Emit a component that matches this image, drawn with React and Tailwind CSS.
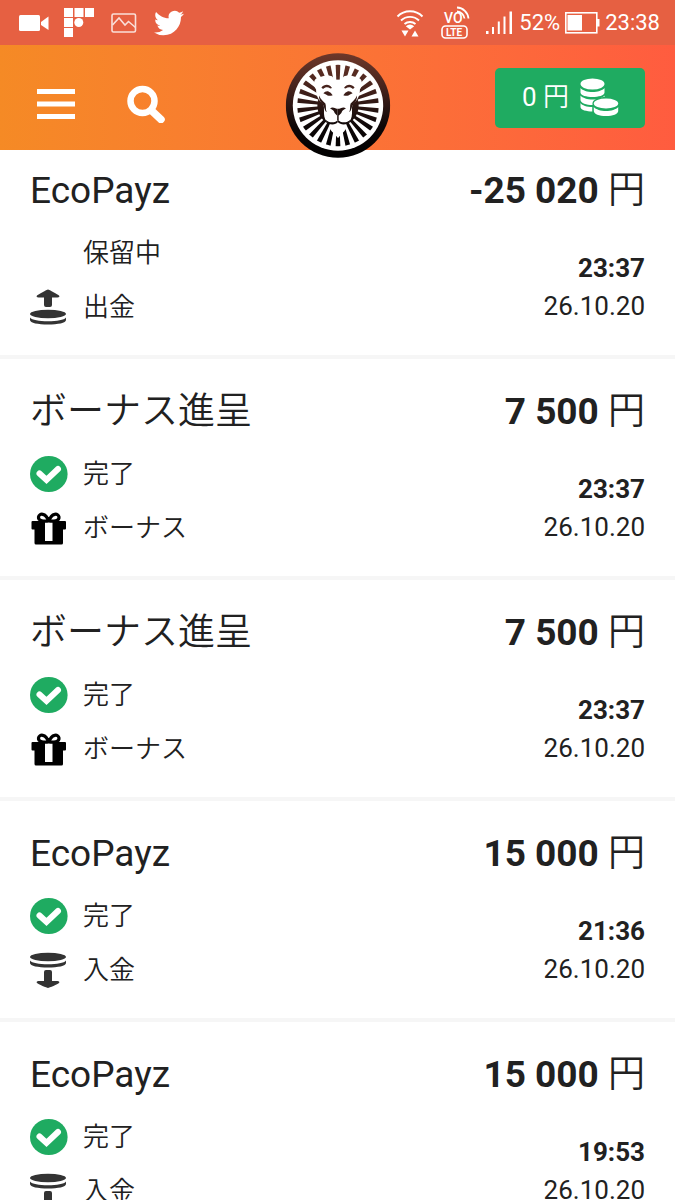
import clsx from "clsx";

const transactions = [
    { id: 1, title: "EcoPayz", amount: "-25 020", status: "保留中", done: false, type: "withdraw", time: "23:37", date: "26.10.20" },
    { id: 2, title: "ボーナス進呈", amount: "7 500", status: "完了", done: true, type: "bonus", time: "23:37", date: "26.10.20" },
    { id: 3, title: "ボーナス進呈", amount: "7 500", status: "完了", done: true, type: "bonus", time: "23:37", date: "26.10.20" },
    { id: 4, title: "EcoPayz", amount: "15 000", status: "完了", done: true, type: "deposit", time: "21:36", date: "26.10.20" },
    { id: 5, title: "EcoPayz", amount: "15 000", status: "完了", done: true, type: "deposit", time: "19:53", date: "26.10.20" },
];

const types = {
    withdraw: { label: "出金", Icon: WithdrawIcon },
    deposit: { label: "入金", Icon: DepositIcon },
    bonus: { label: "ボーナス", Icon: GiftIcon },
};

/* Status bar icons */
function VideoIcon() {
    return (
        <svg viewBox="0 0 30 16" className="h-4 w-[30px]" fill="currentColor">
            <rect x="0" y="0" width="21" height="16" rx="1.5" />
            <path d="M22 7 29.5 1.5V15L22 10z" />
        </svg>
    );
}

function FlipIcon() {
    return (
        <svg viewBox="0 0 30 30" className="size-[30px]" fill="currentColor">
            <path d="M0 0h9v9H0zM10.5 0h9v9h-9zM21 0h9v9h-9zM0 10h9v9H0zM0 20h9v9H0z" />
            <circle cx="14.8" cy="14.5" r="4.5" />
        </svg>
    );
}

function PictureIcon() {
    return (
        <svg viewBox="0 0 26 20" className="h-5 w-[26px] opacity-80" fill="none" stroke="currentColor" strokeWidth="1.6">
            <rect x="1" y="1" width="23.5" height="18" rx="1.5" />
            <path d="M1.5 12 8 5l6 7 3.500-3.500 7 6" />
        </svg>
    );
}

function BirdIcon() {
    return (
        <svg viewBox="0 0 24 24" className="size-[30px]" fill="currentColor">
            <path d="M23.953 4.570a10 10 0 01-2.825.775 4.958 4.958 0 002.163-2.723c-.951.555-2.005.959-3.127 1.184a4.920 4.920 0 00-8.384 4.482C7.690 8.095 4.067 6.130 1.640 3.162a4.822 4.822 0 00-.666 2.475c0 1.710.870 3.213 2.188 4.096a4.904 4.904 0 01-2.228-.616v.060a4.923 4.923 0 003.946 4.827 4.996 4.996 0 01-2.212.085 4.936 4.936 0 004.604 3.417 9.867 9.867 0 01-6.102 2.105c-.390 0-.779-.023-1.170-.067a13.995 13.995 0 007.557 2.209c9.053 0 13.998-7.496 13.998-13.985 0-.210 0-.420-.015-.630A9.935 9.935 0 0024 4.590z" />
        </svg>
    );
}

function WifiIcon() {
    return (
        <svg viewBox="0 0 28 28" className="size-7" fill="none" stroke="currentColor" strokeWidth="1.9">
            <path d="M1.500 7.500a17.500 17.500 0 0 1 25 0M5 11.500a13 13 0 0 1 18 0M8.500 15a8.500 8.500 0 0 1 11 0" />
            <path d="M9.800 17.200q4.200-3.400 8.400 0L14 20.500z" fill="currentColor" stroke="none" />
            <path d="M5.500 21.500h7L9 27.500zM15.500 27.500h7L19 21.500z" fill="currentColor" stroke="none" />
        </svg>
    );
}

function VolteIcon() {
    return (
        <svg viewBox="0 0 30 34" className="h-[34px] w-[30px]" fill="none" stroke="currentColor">
            <text x="4" y="17" fill="currentColor" stroke="none" className="font-[Roboto,sans-serif] text-[14px] font-medium">VO</text>
            <rect x="2" y="20" width="25" height="12" rx="3.5" strokeWidth="1.6" />
            <text x="14" y="30" textAnchor="middle" fill="currentColor" stroke="none" className="font-[Roboto,sans-serif] text-[10px] font-bold">LTE</text>
            <path d="M17 1.500A12 12 0 0 1 28.500 12.500M17 5.500A8 8 0 0 1 24.500 12.500" strokeWidth="1.8" />
        </svg>
    );
}

function SignalIcon() {
    return (
        <svg viewBox="0 0 27 24" className="h-6 w-[27px]" fill="currentColor">
            <path d="M0 20h2.500v3H0zM6 16h2v7H6zM11.800 10.500h2V23h-2zM17.500 5.500h2V23h-2zM23.500 0.500h2.500V23h-2.500z" />
        </svg>
    );
}

function BatteryIcon() {
    return (
        <svg viewBox="0 0 35 22" className="h-[22px] w-[35px]" fill="currentColor">
            <rect x="0.8" y="0.8" width="31" height="20" fill="none" stroke="currentColor" strokeWidth="1.6" />
            <path d="M2.500 3H17v15.500H2.500zM32 7h2.500v7.500H32z" />
        </svg>
    );
}

/* Header icons */
function MenuIcon() {
    return (
        <svg viewBox="0 0 38 30" className="h-[30px] w-[38px]" fill="currentColor">
            <path d="M0 0h38v5H0zM0 12.500h38v5H0zM0 25h38v5H0z" />
        </svg>
    );
}

function SearchIcon() {
    return (
        <svg viewBox="0 0 38 38" className="size-[38px]" fill="none" stroke="currentColor">
            <circle cx="15.5" cy="16" r="12" strokeWidth="6.5" />
            <path d="M25 26 34 34.500" strokeWidth="7.5" strokeLinecap="round" />
        </svg>
    );
}

function CoinsIcon() {
    return (
        <svg viewBox="0 0 39 39" className="size-[39px]">
            <g fill="#fff">
                <path d="M.5 25v4c0 3 6 4.500 12 4.500V29C7 29 2 27.500.5 25z" />
                <path d="M.5 17.500v4.500c0 3 6 5 12 5h2c1.500-2.500 5-4.500 10-5.500v-4c-2 2.500-7 4-12 4s-10-1.500-12-4z" />
                <path d="M.5 10v4.500c0 3 6 4.500 12 4.500s12-1.500 12-4.500V10c-2 2.500-7 4-12 4s-10-1.500-12-4z" />
                <ellipse cx="12.5" cy="6" rx="12" ry="5.5" />
            </g>
            <path d="M12.500 25.500c0-4 6-6.500 13.500-6.500s13.500 2.500 13.500 6.500V33c0 4-6 6.500-13.500 6.500S12.500 37 12.500 33z" fill="#1fab61" />
            <g fill="#fff">
                <ellipse cx="26" cy="25.5" rx="12.2" ry="5" />
                <path d="M13.800 29v4c0 3 5.500 5 12.200 5s12.200-2 12.200-5v-4c-2 2.500-7 4-12.200 4s-10.200-1.500-12.200-4z" />
            </g>
        </svg>
    );
}

const gaps = Array.from({ length: 26 }, (_, i) => (i + 0.5) * (360 / 26));

function LionFaceHalf() {
    return (
        <>
            <path
                d="M1-78C-6-76-12-80-18-88L-34-92-58-84C-74-82-76-62-66-48C-66-30-60-16-44-4C-40 8-44 20-41 34C-38 46-32 52-24 54C-28 66-22 76-14 82C-8 88-4 94 1 98z"
                fill="#fff"
            />
            <g fill="url(#mane)">
                <path d="M-50-54C-41-65-26-65-18-53L-23-51C-31-57-38-56-45-50z" />
                <path d="M-44-37C-38-44-30-46-22-38L-16-31C-24-28-32-29-36-33z" />
                <path d="M-24 8C-14 2-8 10 1 10V32C-6 28-10 24-12 18C-14 12-20 12-24 8z" />
                <path d="M-2 30H2V44H-2z" />
                <path d="M1 42C-8 53-26 54-38 42C-30 61-10 61 1 50z" />
                <path d="M-57-30C-52-18-44-12-38-6C-35 2-38 12-34 20C-42 14-40 4-46-4C-54-10-58-20-57-30z" />
            </g>
        </>
    );
}

function LionLogo() {
    return (
        <svg viewBox="-158 -158 316 316" className="size-[105px]" role="img" aria-label="Lion">
            <defs>
                <linearGradient id="mane" gradientUnits="userSpaceOnUse" x1="0" y1="-158" x2="0" y2="158">
                    <stop offset="0" stopColor="#6e382a" />
                    <stop offset="0.35" stopColor="#43211b" />
                    <stop offset="0.7" stopColor="#0d0707" />
                    <stop offset="1" stopColor="#000" />
                </linearGradient>
            </defs>
            <circle r="157" fill="url(#mane)" />
            <circle r="136" fill="#fff" />
            <circle r="123" fill="url(#mane)" />
            <g fill="#fff">
                {gaps.map((angle) => (
                    <path key={angle} d="M-8-126 L8-126 L3-62 L-3-62z" transform={`rotate(${angle})`} />
                ))}
            </g>
            <LionFaceHalf />
            <g transform="scale(-1 1)">
                <LionFaceHalf />
            </g>
        </svg>
    );
}

/* Transaction icons */
function CheckIcon() {
    return (
        <svg viewBox="0 0 38 38" className="size-[38px]">
            <ellipse cx="18.8" cy="19" rx="18.8" ry="18" fill="#1fab61" />
            <path d="M9.500 18.500l7 6.500L28 14" fill="none" stroke="#fff" strokeWidth="6" strokeLinecap="round" />
        </svg>
    );
}

function GiftIcon() {
    return (
        <svg viewBox="0 0 38 38" className="size-[38px]" fill="#000">
            <path d="M2.500 12H35q1 0 1 1v6.500q0 1-1 1h-2V34q0 1.500-1.500 1.500H6Q4.500 35.500 4.500 34V20.500h-2q-1 0-1-1V13q0-1 1-1z" />
            <path d="M15 13h7.500v19H15z" fill="#fff" />
            <path d="M18.500 12C14 12.500 8 12 8.500 8S16 3.500 18.500 12zM19 12C23.500 12.500 29.500 12 29 8S21.500 3.500 19 12z" fill="none" stroke="#000" strokeWidth="3.2" strokeLinejoin="round" />
        </svg>
    );
}

function WithdrawIcon() {
    return (
        <svg viewBox="0 0 38 38" className="size-[38px]" fill="#333">
            <path d="M18 1.500c1 0 10 5 11 6s0 2-1.500 2H22V17q0 2-2 2h-4q-2 0-2-2V9.500H8.500C7 9.500 6 8.500 7 7.500S17 1.500 18 1.500z" />
            <ellipse cx="18" cy="26" rx="18" ry="4.2" />
            <path d="M0 29.500c2 2.500 9 3.700 18 3.700s16-1.200 18-3.700v2.500c0 3-8 4.500-18 4.500S0 35 0 32z" />
        </svg>
    );
}

function DepositIcon() {
    return (
        <svg viewBox="0 0 38 38" className="size-[38px]" fill="#333">
            <ellipse cx="18" cy="6" rx="18" ry="4.2" />
            <path d="M0 9.500c2 2.500 9 3.700 18 3.700S34 12 36 9.500V12c0 3-8 4.500-18 4.500S0 15 0 12z" />
            <path d="M18 37c1 0 10-4 11-5s0-2-1.500-2H22V21q0-2-2-2h-4q-2 0-2 2v9H8.500c-1.500 0-2.500 1-1.500 2S17 37 18 37z" />
        </svg>
    );
}

function StatusBar() {
    return (
        <div className="flex h-[45px] items-center justify-between bg-[#e66042] pr-[15px] pl-[19px] text-white">
            <div className="flex items-center gap-[15px]">
                <VideoIcon />
                <FlipIcon />
                <div className="px-[2px]"><PictureIcon /></div>
                <BirdIcon />
            </div>
            <div className="flex items-center gap-[5px] text-[22px]">
                <div className="flex items-center gap-4 pr-px">
                    <WifiIcon />
                    <VolteIcon />
                    <SignalIcon />
                </div>
                <span>52%</span>
                <BatteryIcon />
                <span>23:38</span>
            </div>
        </div>
    );
}

function Header() {
    return (
        <header className="relative z-10 flex h-[105px] items-center justify-between bg-linear-to-r from-[#f58a25] to-[#ff5c3f] px-[30px] text-white">
            <div className="flex items-center gap-[52px] pt-3 pl-[7px]">
                <button type="button" aria-label="メニュー"><MenuIcon /></button>
                <button type="button" aria-label="検索"><SearchIcon /></button>
            </div>
            <div className="absolute top-2 left-1/2 -translate-x-1/2">
                <LionLogo />
            </div>
            <button type="button" className="flex h-[60px] w-[150px] items-center justify-end gap-[11px] rounded-[5px] bg-[#1fab61] pr-[26px] text-[26px]">
                <span className="whitespace-nowrap">0 <span className="font-[350]">円</span></span>
                <CoinsIcon />
            </button>
        </header>
    );
}

function Transaction({ item }) {
    const { label, Icon } = types[item.type];

    return (
        <li className="border-b-4 border-[#f6f6f6] px-[30px] pt-[31px] pb-[21px]">
            <div className="flex items-center justify-between text-[37px] leading-[44px]">
                <h2 className={clsx(item.type === "bonus" && "font-[350]")}>{item.title}</h2>
                <p><span className="font-bold">{item.amount}</span> <span className="font-[350]">円</span></p>
            </div>
            <div className="mt-[13px] flex items-end justify-between text-[26px]">
                <div className="font-[350]">
                    <div className="flex h-[54px] items-center gap-[15px]">
                        <div className="size-[38px]">{item.done && <CheckIcon />}</div>
                        <span>{item.status}</span>
                    </div>
                    <div className="flex h-[54px] items-center gap-[15px]">
                        <Icon />
                        <span>{label}</span>
                    </div>
                </div>
                <div className="pb-[9px] text-right leading-[38px]">
                    <p className="font-bold">{item.time}</p>
                    <p>{item.date}</p>
                </div>
            </div>
        </li>
    );
}

export default function App() {
    return (
        <div className="bg-white font-[Roboto,'Noto_Sans_CJK_JP',sans-serif] text-[#212121]">
            <StatusBar />
            <Header />
            <main className="-mt-3">
                <ul>
                    {transactions.map((item) => (
                        <Transaction key={item.id} item={item} />
                    ))}
                </ul>
            </main>
        </div>
    );
}
